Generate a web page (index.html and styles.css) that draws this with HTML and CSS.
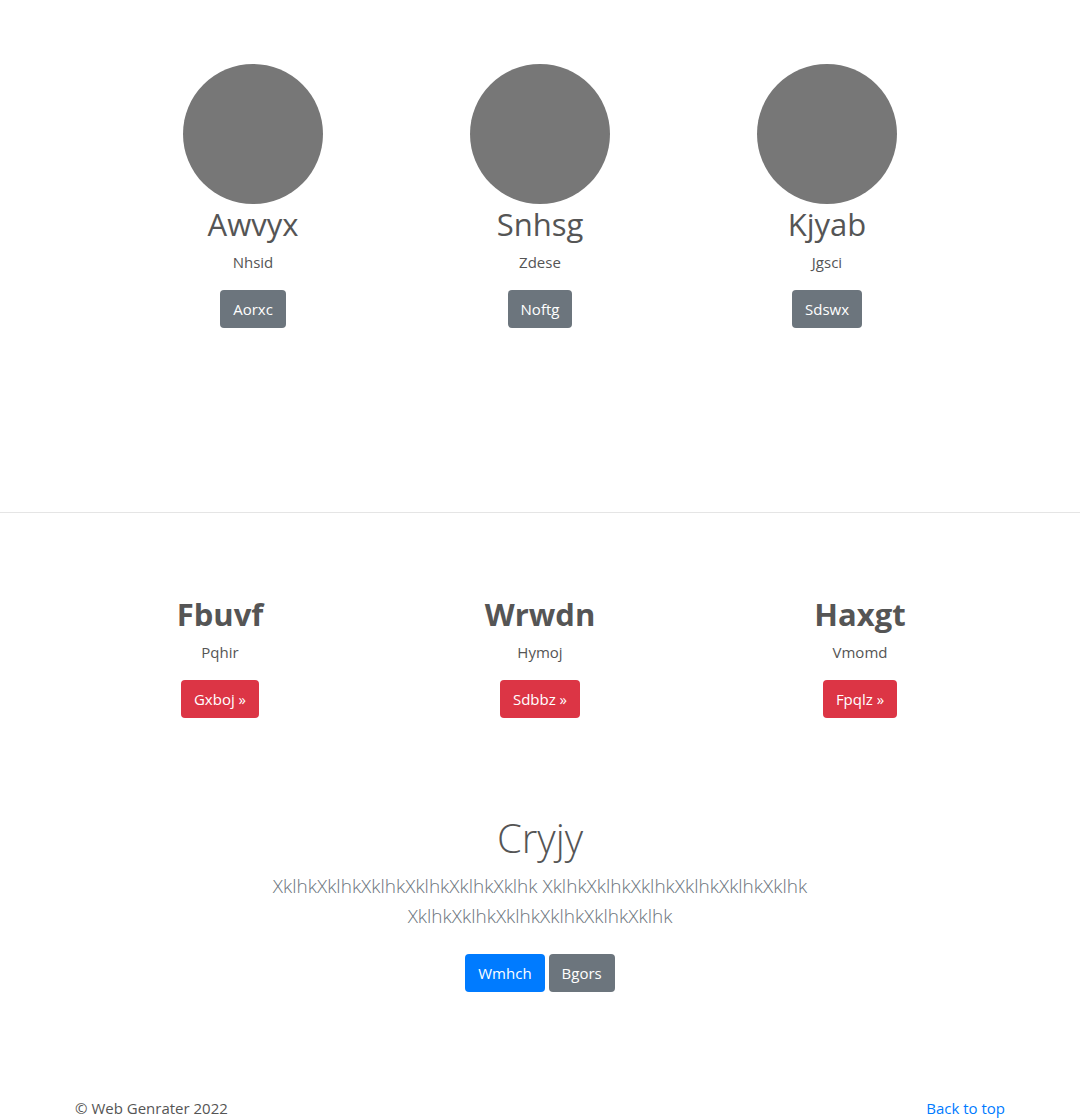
FILE: index.html
```html
<!DOCTYPE html>
<html lang="en">
<head>
<meta charset="utf-8">
<title>Web Genrater</title>
<link rel="stylesheet" href="styles.css">
</head>
<body>
<section class="team">
  <div class="member">
    <div class="avatar"></div>
    <h2 class="member-name">Awvyx</h2>
    <p class="member-role">Nhsid</p>
    <a class="btn btn-secondary" href="#">Aorxc</a>
  </div>
  <div class="member">
    <div class="avatar"></div>
    <h2 class="member-name">Snhsg</h2>
    <p class="member-role">Zdese</p>
    <a class="btn btn-secondary" href="#">Noftg</a>
  </div>
  <div class="member">
    <div class="avatar"></div>
    <h2 class="member-name">Kjyab</h2>
    <p class="member-role">Jgsci</p>
    <a class="btn btn-secondary" href="#">Sdswx</a>
  </div>
</section>

<hr class="divider">

<section class="features">
  <div class="feature">
    <h2 class="feature-title">Fbuvf</h2>
    <p class="feature-text">Pqhir</p>
    <a class="btn btn-danger" href="#">Gxboj &raquo;</a>
  </div>
  <div class="feature">
    <h2 class="feature-title">Wrwdn</h2>
    <p class="feature-text">Hymoj</p>
    <a class="btn btn-danger" href="#">Sdbbz &raquo;</a>
  </div>
  <div class="feature">
    <h2 class="feature-title">Haxgt</h2>
    <p class="feature-text">Vmomd</p>
    <a class="btn btn-danger" href="#">Fpqlz &raquo;</a>
  </div>
</section>

<section class="hero">
  <h1 class="hero-title">Cryjy</h1>
  <p class="hero-lead">XklhkXklhkXklhkXklhkXklhkXklhk XklhkXklhkXklhkXklhkXklhkXklhk XklhkXklhkXklhkXklhkXklhkXklhk</p>
  <div class="hero-actions">
    <a class="btn btn-primary" href="#">Wmhch</a>
    <a class="btn btn-secondary" href="#">Bgors</a>
  </div>
</section>

<footer class="footer">
  <p class="copyright">&copy; Web Genrater 2022</p>
  <a class="back-top" href="#">Back to top</a>
</footer>
</body>
</html>
```

FILE: styles.css
```css
* { box-sizing: border-box; }

body {
  margin: 0;
  font-family: "Open Sans", "Noto Sans", sans-serif;
  font-size: 15px;
  line-height: 1.5;
  color: #555;
  background: #fff;
}

.btn {
  display: inline-block;
  height: 38px;
  padding: 0 13px;
  border-radius: 4px;
  font-size: 15px;
  line-height: 38px;
  color: #fff;
  text-decoration: none;
  vertical-align: middle;
}
.btn-secondary { background: #6c757d; }
.btn-danger { background: #dc3545; }
.btn-primary { background: #007bff; }

/* team */
.team {
  width: 861px;
  margin: 0 auto;
  padding-top: 64px;
  display: grid;
  grid-template-columns: repeat(3, 1fr);
  text-align: center;
}
.avatar {
  width: 140px;
  height: 140px;
  border-radius: 50%;
  background: #777;
  margin: 0 auto;
}
.member-name {
  margin: 2px 0 0;
  font-size: 31px;
  font-weight: 400;
  line-height: 1.2;
}
.member-role {
  margin: 8px 0 16px;
}

.divider {
  margin: 184px 0 0;
  border: 0;
  border-top: 1px solid #e5e5e5;
}

/* features */
.features {
  width: 960px;
  margin: 0 auto;
  padding-top: 83px;
  display: grid;
  grid-template-columns: repeat(3, 1fr);
  text-align: center;
}
.feature-title {
  margin: 0;
  font-size: 31px;
  font-weight: 700;
  line-height: 1.2;
}
.feature-text {
  margin: 8px 0 17px;
}

/* hero */
.hero {
  width: 640px;
  margin: 0 auto;
  padding-top: 96px;
  text-align: center;
}
.hero-title {
  margin: 0;
  font-size: 40px;
  font-weight: 300;
  line-height: 1.2;
}
.hero-lead {
  margin: 9px 0 23px;
  font-size: 19px;
  font-weight: 300;
  line-height: 30px;
  color: #6c757d;
}
.hero-actions {
  display: flex;
  justify-content: center;
  gap: 4px;
}

/* footer */
.footer {
  width: 930px;
  margin: 0 auto;
  padding-top: 105px;
  display: flex;
  justify-content: space-between;
  font-size: 15px;
}
.copyright { margin: 0; }
.back-top { color: #007bff; text-decoration: none; }
```
